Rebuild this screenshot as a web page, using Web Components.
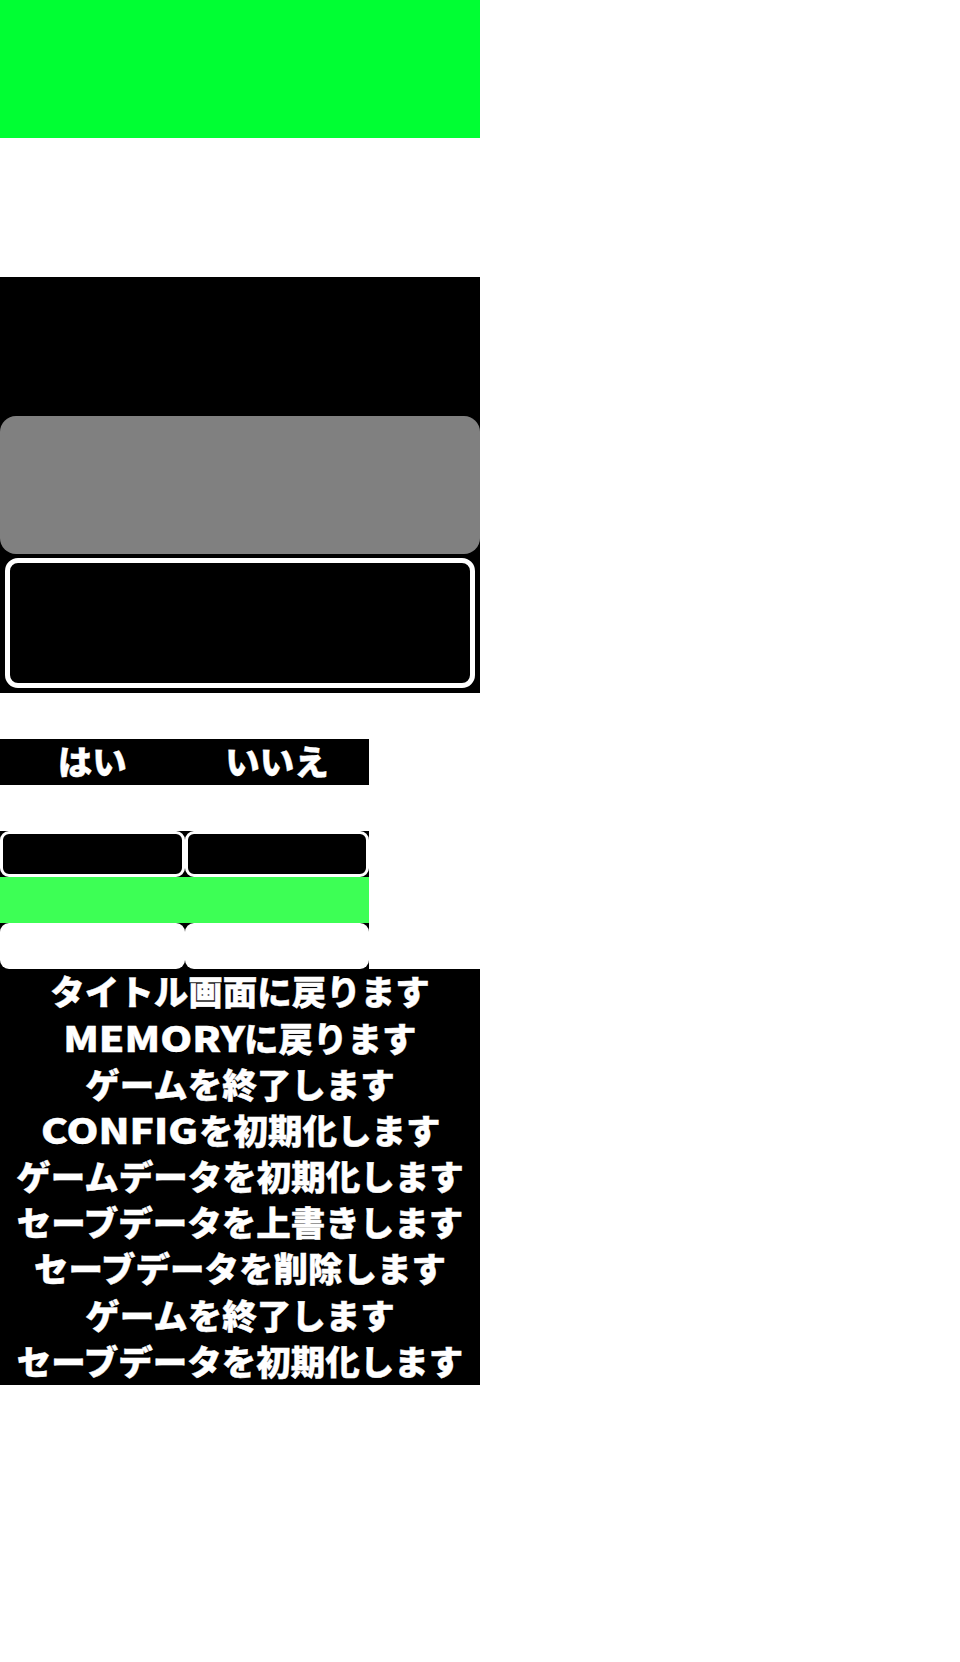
<!DOCTYPE html>
<html lang="ja">
<head>
  <meta charset="UTF-8">
  <title>Dialog sprites</title>
  <style>
    body {
      --u: 46.17px;
      margin: 0;
      background: #fff;
      font-family: "Noto Sans CJK JP", "Noto Sans", sans-serif;
      color: #fff;
    }
    .spacer { height: var(--u); }
  </style>
</head>
<body>
  <color-panel color="#00ff33" style="height:138px"></color-panel>
  <color-panel color="#fff" style="height:139px"></color-panel>
  <color-panel color="#000"></color-panel>
  <window-panel kind="fill"></window-panel>
  <window-panel kind="frame"></window-panel>

  <div class="spacer"></div>

  <choice-row>
    <choice-cell>はい</choice-cell>
    <choice-cell>いいえ</choice-cell>
  </choice-row>

  <div class="spacer"></div>

  <choice-row>
    <choice-cell kind="frame"></choice-cell>
    <choice-cell kind="frame"></choice-cell>
  </choice-row>
  <choice-row style="--row-bg:#3dff55"></choice-row>
  <choice-row>
    <choice-cell kind="fill"></choice-cell>
    <choice-cell kind="fill"></choice-cell>
  </choice-row>

  <message-list>
    <message-line>タイトル画面に戻ります</message-line>
    <message-line><wide-latin>MEMORY</wide-latin>に戻ります</message-line>
    <message-line>ゲームを終了します</message-line>
    <message-line><wide-latin>CONFIG</wide-latin>を初期化します</message-line>
    <message-line>ゲームデータを初期化します</message-line>
    <message-line>セーブデータを上書きします</message-line>
    <message-line>セーブデータを削除します</message-line>
    <message-line>ゲームを終了します</message-line>
    <message-line>セーブデータを初期化します</message-line>
  </message-list>

  <script>
    customElements.define('color-panel', class extends HTMLElement {
      constructor() {
        super();
        this.attachShadow({ mode: 'open' });
        this.shadowRoot.innerHTML = `
          <style>
            :host {
              display: block;
              width: 480px;
              height: calc(var(--u) * 3);
            }
          </style>
        `;
        this.style.background = this.getAttribute('color');
      }
    });

    customElements.define('window-panel', class extends HTMLElement {
      constructor() {
        super();
        this.attachShadow({ mode: 'open' });
        this.shadowRoot.innerHTML = `
          <style>
            :host {
              display: block;
              width: 480px;
              height: calc(var(--u) * 3);
              box-sizing: border-box;
              background: #000;
            }
            :host([kind="frame"]) {
              padding: 4px 5px 5px;
            }
            .box {
              box-sizing: border-box;
              height: 100%;
            }
            :host([kind="fill"]) .box {
              background: #808080;
              border-radius: 16px;
            }
            :host([kind="frame"]) .box {
              border: 5px solid #fff;
              border-radius: 13px;
            }
          </style>
          <div class="box"></div>
        `;
      }
    });

    customElements.define('choice-row', class extends HTMLElement {
      constructor() {
        super();
        this.attachShadow({ mode: 'open' });
        this.shadowRoot.innerHTML = `
          <style>
            :host {
              display: grid;
              grid-template-columns: 1fr 1fr;
              width: 369.3px;
              height: var(--u);
              background: var(--row-bg, #000);
            }
          </style>
          <slot></slot>
        `;
      }
    });

    customElements.define('choice-cell', class extends HTMLElement {
      constructor() {
        super();
        this.attachShadow({ mode: 'open' });
        this.shadowRoot.innerHTML = `
          <style>
            :host {
              display: flex;
              align-items: center;
              justify-content: center;
              box-sizing: border-box;
              height: var(--u);
              padding-bottom: 2px;
              font-size: 34.5px;
              font-weight: 900;
              line-height: 1;
              border-radius: 9px;
              -webkit-text-stroke: .4px #fff;
            }
            :host([kind="frame"]) {
              border: 3px solid #fff;
            }
            :host([kind="fill"]) {
              background: #fff;
            }
          </style>
          <slot></slot>
        `;
      }
    });

    customElements.define('message-list', class extends HTMLElement {
      constructor() {
        super();
        this.attachShadow({ mode: 'open' });
        this.shadowRoot.innerHTML = `
          <style>
            :host {
              display: block;
              width: 480px;
              background: #000;
            }
          </style>
          <slot></slot>
        `;
      }
    });

    customElements.define('message-line', class extends HTMLElement {
      constructor() {
        super();
        this.attachShadow({ mode: 'open' });
        this.shadowRoot.innerHTML = `
          <style>
            :host {
              display: block;
              height: var(--u);
              line-height: calc(var(--u) - 4px);
              font-size: 34.5px;
              font-weight: 900;
              text-align: center;
              white-space: nowrap;
              -webkit-text-stroke: .4px #fff;
            }
          </style>
          <slot></slot>
        `;
      }
    });

    // latin words are much wider in the reference than in the CJK face
    customElements.define('wide-latin', class extends HTMLElement {
      constructor() {
        super();
        this.attachShadow({ mode: 'open' });
        this.shadowRoot.innerHTML = `
          <style>
            :host {
              display: inline-block;
              line-height: 1;
              transform-origin: center;
              transform: scaleX(1.18);
              margin: 0 .38em;
            }
          </style>
          <slot></slot>
        `;
      }
    });
  </script>
</body>
</html>
